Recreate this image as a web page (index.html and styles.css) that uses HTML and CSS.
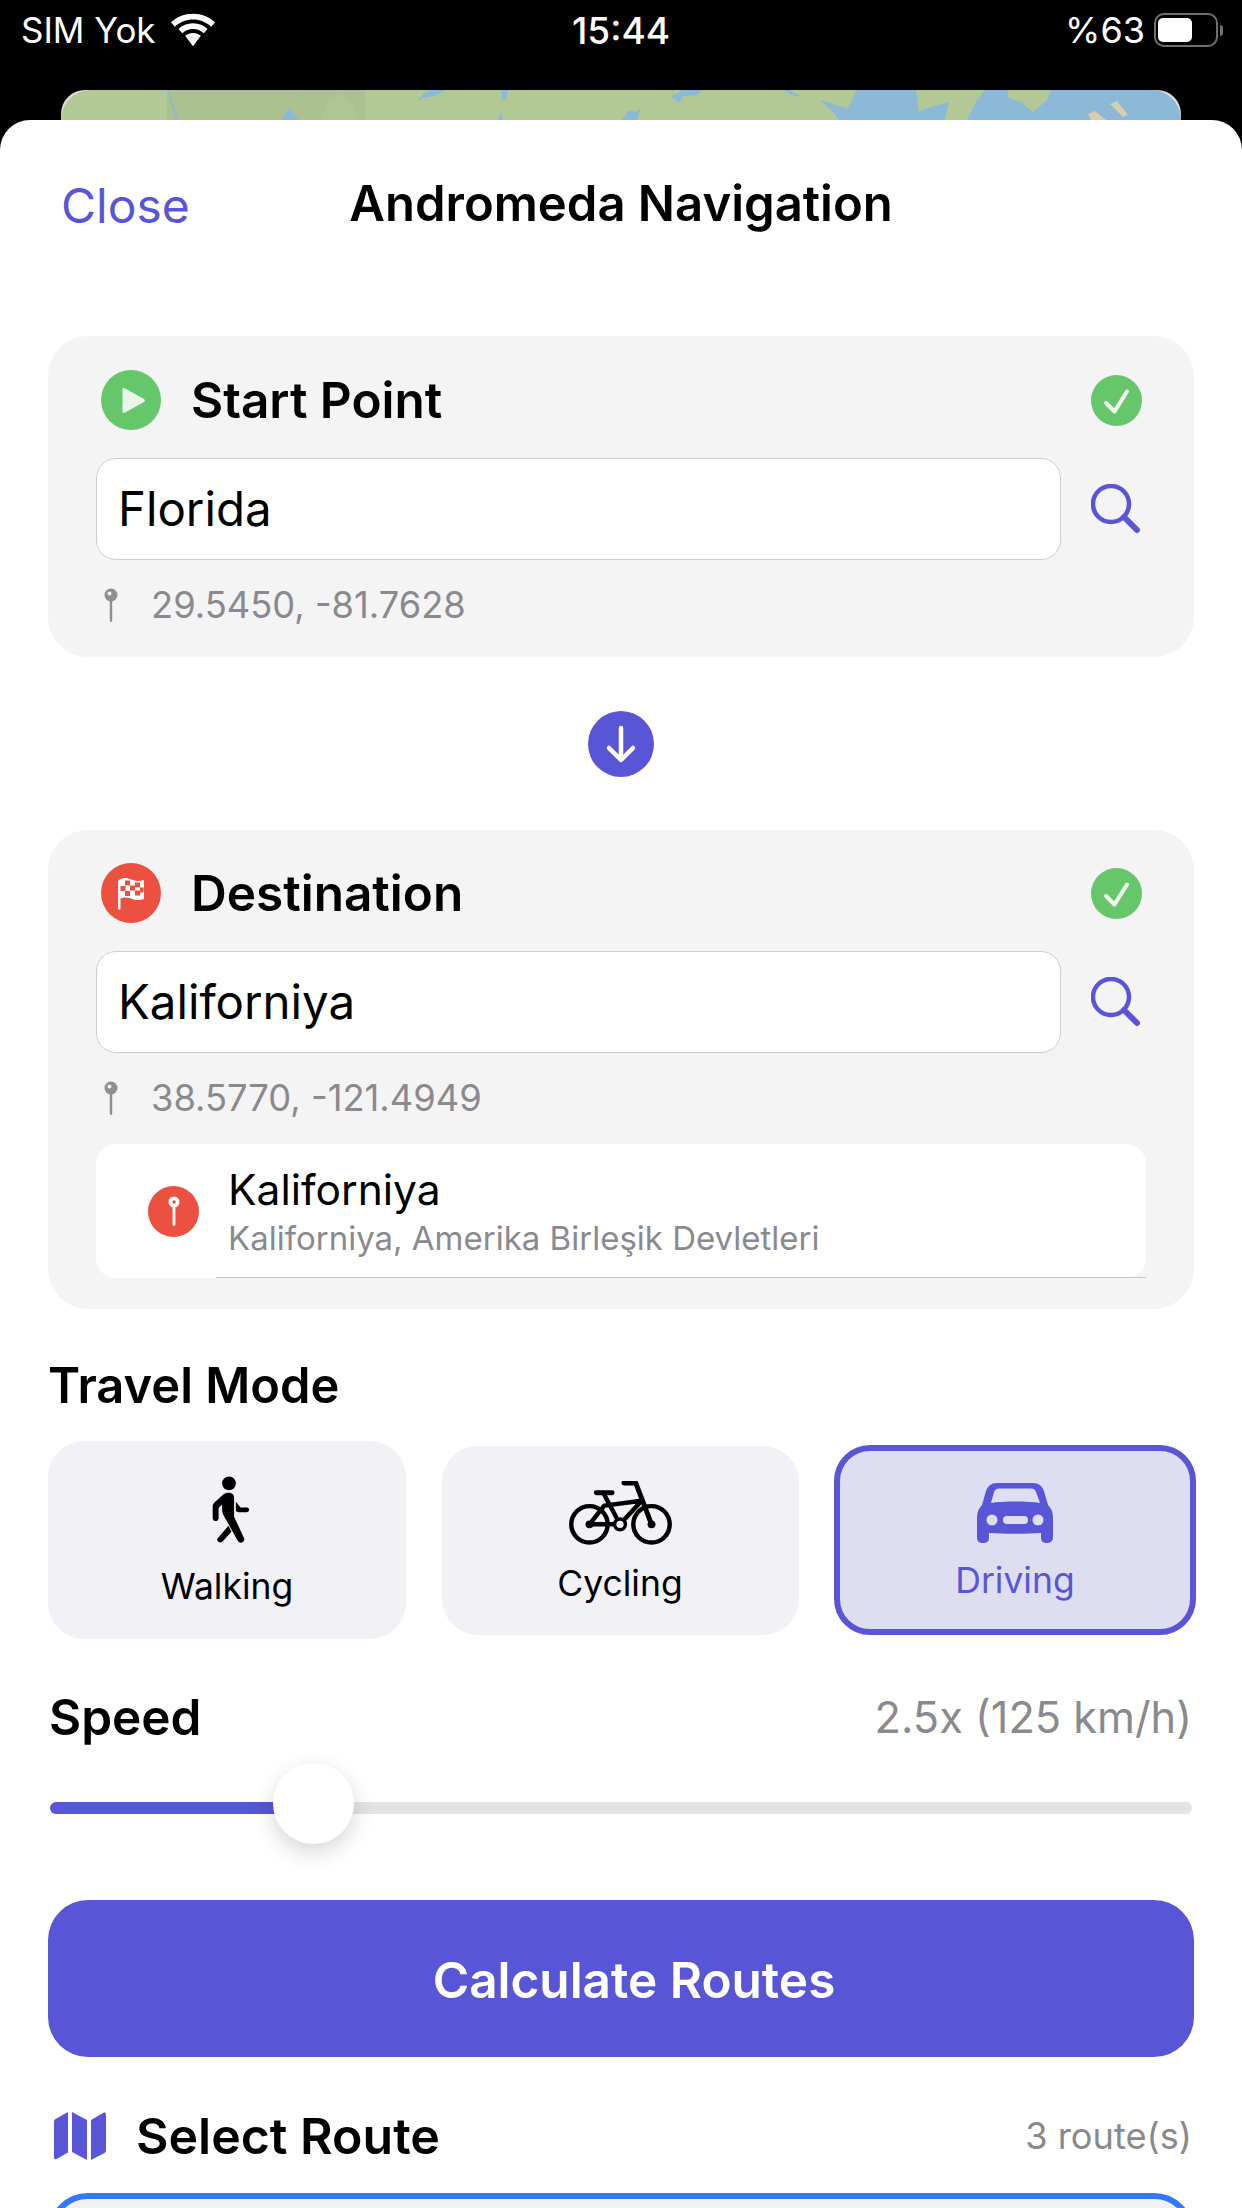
FILE: index.html
```html
<!DOCTYPE html>
<html>

<head>
  <meta charset="UTF-8">
  <title>Andromeda Navigation</title>
  <link rel="stylesheet" href="styles.css">
</head>

<body>
  <div class="phone">
    <div class="statusBar">
      <div class="statusLeft">
        <span>SIM Yok</span>
        <svg class="wifi" viewBox="0 0 48 34"><path d="M24 0C15 0 7 3.400 1 9l4 4.500C10 8.800 17 6 24 6s14 2.800 19 7.500l4-4.500C41 3.400 33 0 24 0z" /><path d="M24 10c-6 0-11.300 2.300-15.200 6l4 4.400c3-2.800 6.900-4.400 11.200-4.400s8.200 1.600 11.200 4.400l4-4.400C35.300 12.300 30 10 24 10z" /><path d="M24 20c-3.200 0-6 1.200-8.200 3.100L24 34l8.200-10.900C30 21.200 27.200 20 24 20z" /></svg>
      </div>
      <div class="statusTime">15:44</div>
      <div class="statusRight">
        <span>%63</span>
        <div class="battery"><div class="batteryLevel"></div></div>
        <div class="batteryCap"></div>
      </div>
    </div>

    <div class="mapPeek">
      <svg viewBox="0 0 1120 30" preserveAspectRatio="none">
        <rect width="1120" height="30" fill="#b2c996" />
        <rect x="106" width="198" height="30" fill="#abc190" />
        <path d="M260 30L268 8L280 4L292 14L297 30z" fill="#aec594" />
        <path d="M106 0H108L117 30H115z" fill="#8cb9d8" />
        <path d="M796 0H1120V30H781L786 18L770 14L760 10L772 20L778 30H781z" fill="#8cb9d8" />
        <path d="M759 10L770 13L785 24L781 30H778L772 22z" fill="#8cb9d8" />
        <path d="M855 0H924L916 10L906 30H884L888 12L866 18L858 22z" fill="#b2c996" />
        <path d="M946 0H990L986 10L972 22L960 12L948 8z" fill="#b2c996" />
        <path d="M1049 14L1056 11L1067 25L1062 27z" fill="#d6cfae" />
        <path d="M1027 24L1034 21L1045 30H1030z" fill="#d6cfae" />
        <path d="M220 30L228 18L238 30z" fill="#8cb9d8" />
        <path d="M356 11L362 4L370 0H385L374 6L362 8z" fill="#8cb9d8" />
        <path d="M440 0H447L445 10H441zM437 30L440 22L442 30z" fill="#8cb9d8" />
        <path d="M561 30L568 20L574 22L580 18L576 30z" fill="#8cb9d8" />
        <path d="M609 6L616 4L620 0H642L636 5L622 6L618 13z" fill="#8cb9d8" />
        <path d="M722 0H728L741 7L734 6z" fill="#8cb9d8" />
      </svg>
    </div>

    <div class="sheet">
      <div class="navBar">
        <div class="closeBtn">Close</div>
        <div class="navTitle">Andromeda Navigation</div>
      </div>

      <div class="pointCard">
        <div class="pointHead">
          <div class="pointIcon greenBg">
            <svg viewBox="0 0 24 24" width="31" height="31"><path d="M5 3.500v17c0 1 .9 1.400 1.700 1l15-8.300c.8-.5.8-1.800 0-2.300l-15-8.300C5.900 2.100 5 2.500 5 3.500z" fill="#fff" opacity=".85" /></svg>
          </div>
          <div class="pointName">Start Point</div>
          <div class="checkIcon">
            <svg viewBox="0 0 51 51" width="51" height="51"><path d="M15 28l8.500 8.500L36 16.500" fill="none" stroke="#fff" stroke-opacity=".9" stroke-width="4" stroke-linecap="round" stroke-linejoin="round" /></svg>
          </div>
        </div>
        <div class="inputRow">
          <div class="textField">Florida</div>
          <svg class="searchIcon" viewBox="0 0 50 50"><circle cx="20" cy="20" r="18" fill="none" stroke="#5856d6" stroke-width="4.500" /><path d="M33 33L46 46" stroke="#5856d6" stroke-width="6" stroke-linecap="round" /></svg>
        </div>
        <div class="coords">
          <svg class="pinIcon" viewBox="0 0 16 34"><circle cx="8" cy="7" r="6.500" fill="#8e8e93" /><circle cx="6.500" cy="5.500" r="2" fill="#f4f4f5" /><rect x="6.800" y="12" width="2.400" height="22" rx="1.200" fill="#8e8e93" /></svg>
          <span>29.5450, -81.7628</span>
        </div>
      </div>

      <div class="arrowWrap">
        <div class="arrowCircle">
          <svg viewBox="0 0 66 66" width="66" height="66"><path d="M33 17V48M21 37L33 49L45 37" fill="none" stroke="#fff" stroke-width="4.500" stroke-linecap="round" stroke-linejoin="round" /></svg>
        </div>
      </div>

      <div class="pointCard destCard">
        <div class="pointHead">
          <div class="pointIcon redBg">
            <svg viewBox="0 0 30 36" width="30" height="36">
              <path d="M3 5C8 2 11 3 15 4.500S23 6.500 28 5V24C23 26 19 25 15 23.500S7 22 4.500 23.500V33.500C4.500 35 2 35 2 33.500V6.500C2 5.800 2.400 5.400 3 5z" fill="#fff" />
              <path d="M9 5.500h5v5H9zM19 7.500h5v5h-5zM4.500 11h5v5h-5zM14 10.500h5v5h-5zM24 12.500h3.500v5H24zM9 16h5v5H9zM19 15.500h5v5h-5z" fill="#ec5040" />
            </svg>
          </div>
          <div class="pointName">Destination</div>
          <div class="checkIcon">
            <svg viewBox="0 0 51 51" width="51" height="51"><path d="M15 28l8.500 8.500L36 16.500" fill="none" stroke="#fff" stroke-opacity=".9" stroke-width="4" stroke-linecap="round" stroke-linejoin="round" /></svg>
          </div>
        </div>
        <div class="inputRow">
          <div class="textField">Kaliforniya</div>
          <svg class="searchIcon" viewBox="0 0 50 50"><circle cx="20" cy="20" r="18" fill="none" stroke="#5856d6" stroke-width="4.500" /><path d="M33 33L46 46" stroke="#5856d6" stroke-width="6" stroke-linecap="round" /></svg>
        </div>
        <div class="coords">
          <svg class="pinIcon" viewBox="0 0 16 34"><circle cx="8" cy="7" r="6.500" fill="#8e8e93" /><circle cx="6.500" cy="5.500" r="2" fill="#f4f4f5" /><rect x="6.800" y="12" width="2.400" height="22" rx="1.200" fill="#8e8e93" /></svg>
          <span>38.5770, -121.4949</span>
        </div>
        <div class="resultCard">
          <div class="resultIcon">
            <svg viewBox="0 0 16 34" width="16" height="34"><circle cx="8" cy="8" r="5.500" fill="#fff" /><circle cx="8" cy="8" r="1.800" fill="#ec5040" /><rect x="6.600" y="12" width="2.800" height="20" rx="1.400" fill="#fff" /></svg>
          </div>
          <div class="resultText">
            <div class="resultName">Kaliforniya</div>
            <div class="resultSub">Kaliforniya, Amerika Birleşik Devletleri</div>
          </div>
        </div>
      </div>

      <div class="sectionTitle travelTitle">Travel Mode</div>
      <div class="modeRow">
        <div class="modeBtn walking">
          <svg class="modeIcon walkIcon" viewBox="0 0 44 72">
            <circle cx="24" cy="7.500" r="7" />
            <path d="M24 17c3.500 0 5.200 2.400 5.200 5.200v19l10 21.600c.9 2-.2 4-2 4.700-1.700.6-3.400-.1-4.300-1.800L22 46c-3-5-5-8-5-12v-5l-3.500 3.500v10c0 1.800-1.300 3.200-3 3.200s-3-1.400-3-3.200V31c0-1.600.5-3 1.700-4.200l9-8C19.500 17.600 21.500 17 24 17z" />
            <path d="M13 62.500l10.500-12 3 6-8.500 9.500c-1.300 1.500-3.200 1.800-4.700.6-1.600-1.200-1.700-2.900-.3-4.100z" />
            <path d="M31 26l4.800 6h6c1.500 0 2.700 1 2.700 2.400s-1.200 2.400-2.700 2.400H34c-1 0-2-.4-3-1.300z" />
          </svg>
          <div class="modeLabel">Walking</div>
        </div>
        <div class="modeBtn cycling">
          <svg class="modeIcon bikeIcon" viewBox="0 0 104 66">
            <g fill="none" stroke="#000" stroke-width="4.500" stroke-linecap="round" stroke-linejoin="round">
              <circle cx="21" cy="44" r="18.500" />
              <circle cx="84" cy="44" r="18.500" />
              <path d="M56 2H68L84 44" stroke-width="5" />
              <path d="M28 12H44" stroke-width="5" />
              <path d="M35 12L52 44L74 20L36 25L21 44H52" />
            </g>
            <circle cx="21" cy="44" r="4" />
            <circle cx="84" cy="44" r="4" />
            <circle cx="52" cy="44" r="5.500" fill="#f1f1f6" stroke="#000" stroke-width="3.500" />
          </svg>
          <div class="modeLabel">Cycling</div>
        </div>
        <div class="modeBtn active">
          <svg class="modeIcon carIcon" viewBox="0 0 76 60">
            <path d="M20 0H56C62 0 65 3 67 8L71 22C74 25 76 29 76 34V54C76 57.500 74 60 70 60H70C65 60 64 57.500 64 54V50C50 51 26 51 12 50V54C12 57.500 11 60 6 60S0 57.500 0 54V34C0 29 2 25 5 22L9 8C11 3 14 0 20 0z" fill="#5856d6" />
            <path d="M14 20L17 9C18 6.500 19.500 5.500 22 5.500H54C56.500 5.500 58 6.500 59 9L63 20C50 18 26 18 14 20z" fill="#dedef3" />
            <circle cx="15" cy="37" r="5.500" fill="#dedef3" />
            <circle cx="61" cy="37" r="5.500" fill="#dedef3" />
            <rect x="26" y="33" width="25" height="8" rx="4" fill="#dedef3" />
          </svg>
          <div class="modeLabel">Driving</div>
        </div>
      </div>

      <div class="speedHead">
        <div class="sectionTitle">Speed</div>
        <div class="speedValue">2.5x (125 km/h)</div>
      </div>
      <div class="slider">
        <div class="sliderTrack">
          <div class="sliderFill"></div>
        </div>
        <div class="sliderThumb"></div>
      </div>

      <div class="calcBtn">Calculate Routes</div>

      <div class="routeHead">
        <svg class="mapIcon" viewBox="0 0 52 48">
          <path d="M0 9.500c0-1.200.5-2 1.500-2.600L14 0v40.500L2.500 47C1.200 47.700 0 47 0 45.500z" />
          <path d="M18 0l15 8v40L18 40z" />
          <path d="M37 8l12.500-7.200c1.200-.7 2.500 0 2.500 1.500V38.500c0 1.200-.5 2-1.500 2.600L37 48z" />
        </svg>
        <div class="sectionTitle routeTitle">Select Route</div>
        <div class="routeCount">3 route(s)</div>
      </div>
      <div class="routeCard"></div>
    </div>
  </div>
</body>

</html>
```

FILE: styles.css
```css
* {
  box-sizing: border-box;
}

body {
  margin: 0;
  background-color: #000;
  font-family: Inter, "Noto Sans", sans-serif;
  color: #000;
}

.phone {
  position: relative;
  width: 1242px;
  height: 2208px;
  overflow: hidden;
  background-color: #000;
}

.statusBar {
  height: 60px;
  padding: 0 16px;
  display: grid;
  grid-template-columns: 1fr auto 1fr;
  align-items: center;
  color: #fff;
  font-size: 35px;
}

.statusLeft {
  display: flex;
  align-items: center;
  gap: 14px;
  margin-left: 5px;
}

.wifi {
  width: 46px;
  height: 34px;
  fill: #fff;
}

.statusTime {
  font-size: 37px;
  font-weight: 500;
}

.statusRight {
  display: flex;
  align-items: center;
  justify-content: flex-end;
  margin-right: 3px;
  font-size: 36px;
}

.battery {
  width: 64px;
  height: 34px;
  margin-left: 9px;
  padding: 3px 2px;
  border: 2px solid #6f6f6f;
  border-radius: 10px;
}

.batteryLevel {
  width: 34px;
  height: 100%;
  background-color: #fff;
  border-radius: 5px;
}

.batteryCap {
  width: 3px;
  height: 11px;
  margin-left: 2px;
  background-color: #6f6f6f;
  border-radius: 0 3px 3px 0;
}

.mapPeek {
  width: 1120px;
  height: 50px;
  margin: 30px 0 0 61px;
  overflow: hidden;
  border-radius: 24px 24px 0 0;
  background-color: #dcdcd8;
}

.mapPeek svg {
  display: block;
  width: 100%;
  height: 30px;
  border-radius: 36px 36px 0 0;
}

.sheet {
  position: absolute;
  left: 0;
  top: 120px;
  width: 1242px;
  height: 2088px;
  padding: 0 48px;
  overflow: hidden;
  background-color: #fff;
  border-radius: 30px 30px 0 0;
}

.navBar {
  position: relative;
  height: 216px;
  padding-top: 55px;
  text-align: center;
  font-size: 49px;
  line-height: 58px;
}

.closeBtn {
  position: absolute;
  left: 13px;
  top: 57px;
  color: #5856d6;
  font-size: 48px;
}

.navTitle {
  font-weight: 600;
}

.pointCard {
  height: 321px;
  padding: 34px 52px 0 48px;
  background-color: #f4f4f5;
  border-radius: 40px;
}

.destCard {
  height: 479px;
  padding-top: 33px;
}

.pointHead {
  display: flex;
  align-items: center;
  height: 60px;
  margin-bottom: 28px;
}

.pointIcon {
  width: 60px;
  height: 60px;
  margin-left: 5px;
  margin-right: 30px;
  border-radius: 50%;
  display: flex;
  align-items: center;
  justify-content: center;
}

.greenBg {
  background-color: #66c66a;
}

.redBg {
  background-color: #ec5040;
}

.pointName {
  flex: 1;
  font-size: 49.500px;
  font-weight: 600;
}

.checkIcon {
  width: 51px;
  height: 51px;
  border-radius: 50%;
  background-color: #66c66a;
}

.checkIcon svg {
  display: block;
}

.inputRow {
  display: flex;
  align-items: center;
  justify-content: space-between;
}

.textField {
  width: 965px;
  height: 102px;
  padding-left: 21px;
  line-height: 100px;
  font-size: 47.400px;
  background-color: #fff;
  border: 1.500px solid #cfcfcf;
  border-radius: 20px;
}

.searchIcon {
  width: 50px;
  height: 50px;
  margin-right: 1px;
}

.coords {
  display: flex;
  align-items: center;
  height: 34px;
  margin-top: 28px;
  color: #8a8a8e;
  font-size: 36.300px;
}

.pinIcon {
  width: 16px;
  height: 34px;
  margin-left: 7px;
  margin-right: 32px;
}

.arrowWrap {
  height: 173px;
  display: flex;
  align-items: center;
  justify-content: center;
}

.arrowCircle {
  width: 66px;
  height: 66px;
  border-radius: 50%;
  background-color: #5856d6;
}

.arrowCircle svg {
  display: block;
}

.resultCard {
  position: relative;
  height: 134px;
  margin-top: 29px;
  margin-right: -4px;
  padding-left: 52px;
  display: flex;
  align-items: center;
  gap: 29px;
  background-color: #fff;
  border-radius: 20px;
}

.resultCard::after {
  content: "";
  position: absolute;
  left: 120px;
  right: 0;
  bottom: 0;
  height: 1.500px;
  background-color: #c4c4c4;
}

.resultIcon {
  width: 51px;
  height: 51px;
  border-radius: 50%;
  background-color: #ec5040;
  display: flex;
  align-items: center;
  justify-content: center;
}

.resultName {
  font-size: 42.500px;
  line-height: 50px;
}

.resultSub {
  margin-top: 4px;
  color: #8a8a8e;
  font-size: 33px;
  line-height: 38px;
}

.sectionTitle {
  font-size: 49.500px;
  font-weight: 600;
  line-height: 58px;
}

.travelTitle {
  margin: 48px 0 0 0;
  font-size: 48.800px;
}

.routeTitle {
  font-size: 50px;
}

.modeRow {
  height: 198px;
  margin: 26px -2px 0 0;
  display: flex;
  align-items: center;
  justify-content: space-between;
}

.modeBtn {
  display: flex;
  flex-direction: column;
  align-items: center;
  background-color: #f1f1f6;
  border-radius: 36px;
}

.modeBtn.walking {
  width: 358px;
  padding: 35px 0 30px;
}

.modeBtn.cycling {
  width: 357px;
  padding: 35px 0 29px;
}

.modeBtn.active {
  width: 362px;
  padding: 32px 0 26px;
  color: #5856d6;
  background-color: #dedef3;
  border: 6px solid #5856d6;
}

.modeIcon {
  display: block;
  margin-bottom: 16px;
}

.walkIcon {
  width: 44px;
  height: 71px;
  margin-bottom: 18px;
  fill: #000;
}

.bikeIcon {
  width: 104px;
  height: 65px;
}

.carIcon {
  width: 76px;
  height: 60px;
}

.modeLabel {
  font-size: 35.500px;
  line-height: 44px;
}

.speedHead {
  display: flex;
  align-items: center;
  justify-content: space-between;
  margin: 49px 2px 0 1px;
}

.speedValue {
  color: #8a8a8e;
  font-size: 43.300px;
}

.slider {
  position: relative;
  height: 81px;
  margin: 17px 2px 0;
  display: flex;
  align-items: center;
}

.sliderTrack {
  width: 100%;
  height: 12px;
  margin-top: 9px;
  overflow: hidden;
  background-color: #e3e3e3;
  border-radius: 6px;
}

.sliderFill {
  width: 225px;
  height: 100%;
  background-color: #5856d6;
}

.sliderThumb {
  position: absolute;
  left: 223px;
  top: 0;
  width: 81px;
  height: 81px;
  background-color: #fff;
  border-radius: 50%;
  box-shadow: 0 8px 22px rgba(0, 0, 0, 0.16);
}

.calcBtn {
  height: 157px;
  margin-top: 56px;
  padding-left: 26px;
  line-height: 160px;
  text-align: center;
  color: #fff;
  font-size: 49.500px;
  font-weight: 600;
  background-color: #5856d6;
  border-radius: 40px;
}

.routeHead {
  display: flex;
  align-items: center;
  height: 58px;
  margin: 50px 2px 0;
}

.mapIcon {
  width: 52px;
  height: 48px;
  margin: 0 30px 0 4px;
  fill: #5856d6;
}

.routeCount {
  margin-left: auto;
  color: #8a8a8e;
  font-size: 36.200px;
}

.routeCard {
  height: 120px;
  margin-top: 28px;
  background-color: #f2f2f4;
  border: 6px solid #3478f6;
  border-radius: 40px;
}
```
